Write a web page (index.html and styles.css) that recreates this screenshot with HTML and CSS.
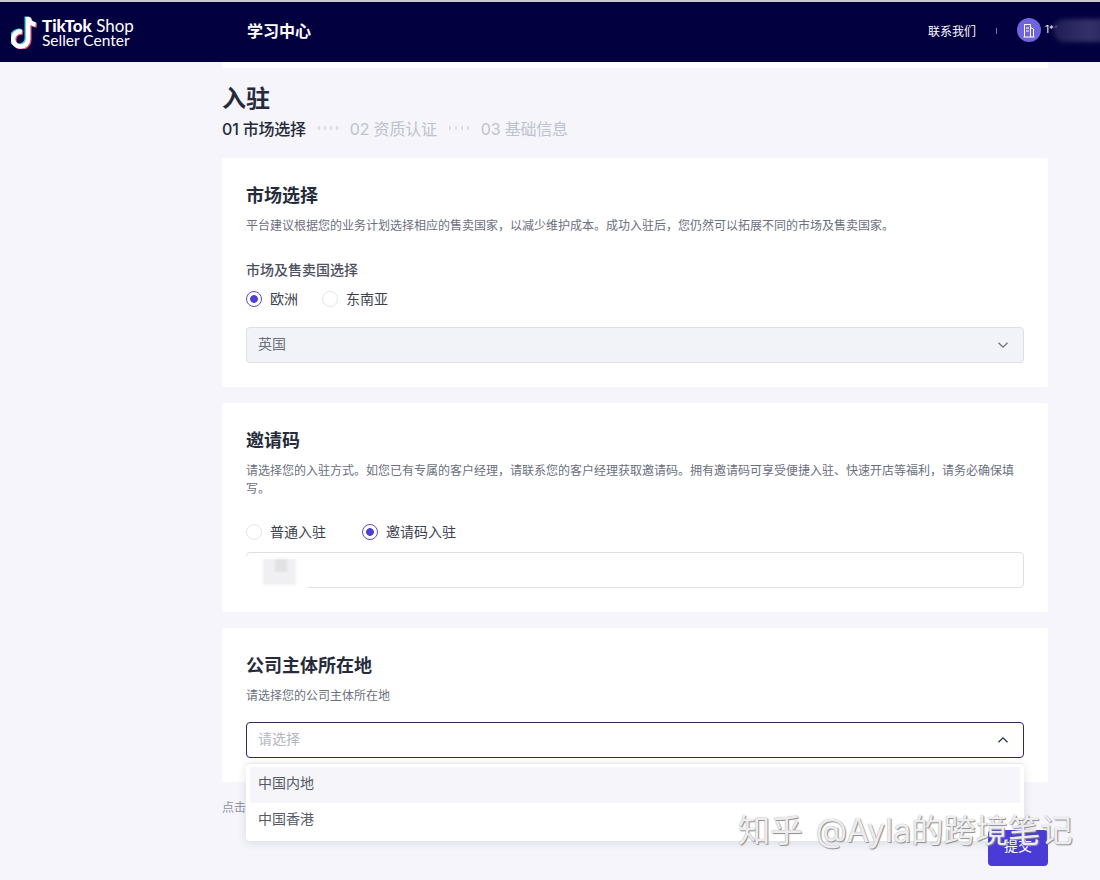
FILE: index.html
```html
<!DOCTYPE html>
<html lang="zh">
<head>
<meta charset="utf-8">
<title>入驻</title>
<link rel="stylesheet" href="styles.css">
</head>
<body>
<div class="header">
    <div class="logo">
        <svg class="logo-icon" width="29" height="34" viewBox="0 0 29 34">
            <path class="note-cyan" d="M9.500 15.900a7.500 7.500 0 1 0 6.300 7.400V1.500" />
            <path class="note-cyan" d="M15.800 2c.6 3.800 3.300 6.500 7.500 7" />
            <path class="note-pink" d="M12 17.500a7.500 7.500 0 1 0 6.300 7.400V3" />
            <path class="note-pink" d="M18.300 3.500c.6 3.800 3.300 6.500 7.500 7" />
            <path class="note-white" d="M10.800 16.700a7.500 7.500 0 1 0 6.300 7.400V2" />
            <path class="note-white" d="M17.100 2.500c.6 3.800 3.300 6.500 7.500 7" />
        </svg>
        <div class="logo-text">
            <div class="logo-line-a"><b>TikTok</b> Shop</div>
            <div class="logo-line-b">Seller Center</div>
        </div>
    </div>
    <div class="header-title">学习中心</div>
    <div class="header-right">
        <span class="contact">联系我们</span>
        <span class="sep"></span>
        <span class="avatar">
            <svg width="12" height="15" viewBox="0 0 12 15">
                <path d="M1.500 14V1.500h6v12.500M7.500 4.500l3 1.500v8M.5 14h11M3 5h3M3 8h3" />
            </svg>
        </span>
        <span class="user">1**</span>
        <span class="user-blur"></span>
    </div>
</div>

<div class="page">
    <div class="strip"></div>
    <h1 class="page-title">入驻</h1>
    <div class="steps">
        <span class="step active">01 市场选择</span>
        <span class="dots"></span>
        <span class="step">02 资质认证</span>
        <span class="dots"></span>
        <span class="step">03 基础信息</span>
    </div>

    <div class="card card-market">
        <h2>市场选择</h2>
        <p class="desc">平台建议根据您的业务计划选择相应的售卖国家，以减少维护成本。成功入驻后，您仍然可以拓展不同的市场及售卖国家。</p>
        <div class="label">市场及售卖国选择</div>
        <div class="radios">
            <span class="radio checked"><i></i>欧洲</span>
            <span class="radio"><i></i>东南亚</span>
        </div>
        <div class="select disabled">
            <span>英国</span>
            <svg class="arrow" width="12" height="8" viewBox="0 0 12 8"><path d="M1.500 1.800L6 6.200l4.500-4.400" /></svg>
        </div>
    </div>

    <div class="card card-invite">
        <h2>邀请码</h2>
        <p class="desc">请选择您的入驻方式。如您已有专属的客户经理，请联系您的客户经理获取邀请码。拥有邀请码可享受便捷入驻、快速开店等福利，请务必确保填写。</p>
        <div class="radios">
            <span class="radio"><i></i>普通入驻</span>
            <span class="radio checked"><i></i>邀请码入驻</span>
        </div>
        <div class="select input">
            <div class="code-blur"><div class="code-gray"></div></div>
        </div>
    </div>

    <div class="card card-company">
        <h2>公司主体所在地</h2>
        <p class="desc">请选择您的公司主体所在地</p>
        <div class="select focused">
            <span class="placeholder">请选择</span>
            <svg class="arrow up" width="12" height="8" viewBox="0 0 12 8"><path d="M1.500 6.200L6 1.800l4.500 4.400" /></svg>
            <div class="dropdown">
                <div class="option hover">中国内地</div>
                <div class="option">中国香港</div>
            </div>
        </div>
    </div>

    <div class="footer-row">
        <p class="agree">点击</p>
        <button class="submit">提交</button>
    </div>
</div>

<div class="watermark">知乎 @Ayla的跨境笔记</div>
</body>
</html>
```

FILE: styles.css
```css
html, body {
    margin: 0;
    height: 880px;
    overflow: hidden;
}
* {
    box-sizing: border-box;
    font-family: "Inter", "Noto Sans CJK SC", sans-serif;
}
body {
    background: #f5f5fb;
    color: #252b3a;
    position: relative;
}

/* header */
.header {
    height: 62px;
    padding-bottom: 4px;
    background: #03003f;
    border-top: 2px solid #c9c9cf;
    display: flex;
    align-items: center;
    color: #fff;
}
.logo {
    width: 247px;
    padding: 4px 0 0 11px;
    display: flex;
    align-items: center;
    gap: 2px;
}
.logo-icon path {
    fill: none;
    stroke-width: 4.500;
}
.logo-icon .note-cyan { stroke: #3fd6dc; }
.logo-icon .note-pink { stroke: #e8527c; }
.logo-icon .note-white { stroke: #fff; }
.logo-text {
    font-family: "Lato", sans-serif;
    font-weight: 400;
    white-space: nowrap;
}
.logo-line-a {
    font-family: "Lato", sans-serif;
    font-size: 17px;
    line-height: 15px;
}
.logo-line-b {
    font-family: "Lato", sans-serif;
    font-size: 15.500px;
    line-height: 14px;
}
.logo-text b {
    font-family: "Lato", sans-serif;
    font-weight: 900;
}
.header-title {
    font-size: 16px;
    font-weight: 700;
}
.header-right {
    margin-left: auto;
    display: flex;
    align-items: center;
    position: relative;
    width: 172px;
    font-size: 12px;
}
.sep {
    width: 1px;
    height: 6px;
    background: #77779a;
    margin: 2px 20px 0;
}
.avatar {
    width: 24px;
    height: 24px;
    border-radius: 50%;
    background: #6f64dc;
    display: flex;
    align-items: center;
    justify-content: center;
    margin-right: 4px;
}
.avatar path {
    fill: none;
    stroke: #fff;
    stroke-width: 1;
}
.user {
    font-size: 10px;
    margin-top: -3px;
}
.user-blur {
    position: absolute;
    left: 125px;
    top: 1px;
    width: 60px;
    height: 23px;
    background: linear-gradient(90deg, #1d1a55 0, #2a2760 30%, #34306a 60%, #26225c 100%);
    border-radius: 12px 0 0 12px;
    filter: blur(2px);
}

/* page */
.page {
    padding: 0 52px 0 222px;
}
.strip {
    height: 6px;
    background: #fff;
}
.page-title {
    margin: 14px 0 0;
    font-size: 24px;
    line-height: 34px;
    font-weight: 700;
}
.steps {
    display: flex;
    align-items: center;
    height: 24px;
    margin-bottom: 18px;
    font-size: 16px;
    letter-spacing: -.2px;
    color: #bfc1cf;
}
.step.active {
    color: #252b3a;
    font-weight: 500;
}
.dots {
    width: 20px;
    height: 4px;
    margin: 0 12px;
    background: repeating-linear-gradient(to right, #dcdde6 0 2px, transparent 2px 6px);
}

/* cards */
.card {
    background: #fff;
    border-radius: 2px;
    padding: 25px 24px 24px;
    margin-bottom: 16px;
}
.card-market { height: 229px; }
.card-invite { height: 209px; }
.card-company { height: 154px; margin-bottom: 0; }
.card h2 {
    margin: 0;
    font-size: 18px;
    line-height: 26px;
    font-weight: 700;
}
.desc {
    margin: 8px 0 0;
    font-size: 12px;
    line-height: 18px;
    color: #6b6f7e;
}
.label {
    margin-top: 26px;
    font-size: 14px;
    line-height: 18px;
    font-weight: 500;
    color: #4d5160;
}
.radios {
    display: flex;
    gap: 24px;
    height: 24px;
    margin-top: 8px;
    font-size: 14px;
    line-height: 24px;
    color: #3b3f4e;
}
.card-invite .radios {
    gap: 36px;
    margin-top: 22px;
}
.radio {
    display: flex;
    align-items: center;
}
.radio i {
    width: 16px;
    height: 16px;
    margin-right: 8px;
    border: 1px solid #e4e5ea;
    border-radius: 50%;
    background: #fff;
}
.radio.checked i {
    border-color: #5a4fc8;
    background: radial-gradient(circle, #4d3fd8 3.500px, #fff 4.200px);
}

/* select */
.select {
    position: relative;
    display: flex;
    align-items: center;
    justify-content: space-between;
    height: 36px;
    margin-top: 16px;
    padding: 0 14px 5px 11px;
    border: 1px solid #dfe0e6;
    border-radius: 4px;
    background: #fff;
    font-size: 14px;
    color: #6b6f7e;
}
.select.disabled {
    background: #f2f3f8;
}
.select.input {
    margin-top: 8px;
}
.select.focused {
    margin-top: 17px;
    border-color: #2e2a5c;
}
.placeholder {
    color: #b4b6c2;
}
.arrow {
    margin-top: 5px;
}
.arrow path {
    fill: none;
    stroke: #6b6f7e;
    stroke-width: 1.200;
}
.arrow.up path {
    stroke: #252b3a;
}
/* the smudged-out invite code */
.code-blur {
    position: absolute;
    left: -3px;
    top: 3px;
    width: 64px;
    height: 36px;
    padding: 3px 12px 7px 19px;
    background: #fff;
    filter: blur(1px);
}
.code-gray {
    height: 100%;
    background: linear-gradient(#e2e2e4, #e2e2e4) 12px 0 / 12px 13px no-repeat, #f0f0f2;
}
.dropdown {
    position: absolute;
    left: -1px;
    right: -1px;
    top: 40px;
    height: 78px;
    padding: 3px 4px 0;
    background: #fff;
    border-radius: 4px;
    border-top: 1px solid #e8e8ec;
    box-shadow: 0 2px 10px rgba(30, 30, 60, .12);
}
.option {
    height: 36px;
    padding-left: 8px;
    line-height: 32px;
    font-size: 14px;
    color: #555966;
}
.option.hover {
    background: #f5f5fa;
}

/* bottom */
.footer-row {
    position: relative;
    height: 98px;
}
.agree {
    margin: 0;
    padding-top: 17px;
    font-size: 12px;
    line-height: 18px;
    color: #8f92a1;
}
.submit {
    position: absolute;
    right: 0;
    top: 48px;
    width: 60px;
    height: 36px;
    padding: 0 0 6px;
    border: none;
    border-radius: 4px;
    background: #4b3bd6;
    color: #fff;
    font-size: 14px;
}
.watermark {
    position: absolute;
    left: 738px;
    top: 809px;
    font-size: 32.300px;
    line-height: 44px;
    word-spacing: 4px;
    color: rgba(255, 255, 255, .85);
    text-shadow: 1px 1px 1px #8e8e94, 0 0 1px #8e8e94;
    white-space: nowrap;
}
```
